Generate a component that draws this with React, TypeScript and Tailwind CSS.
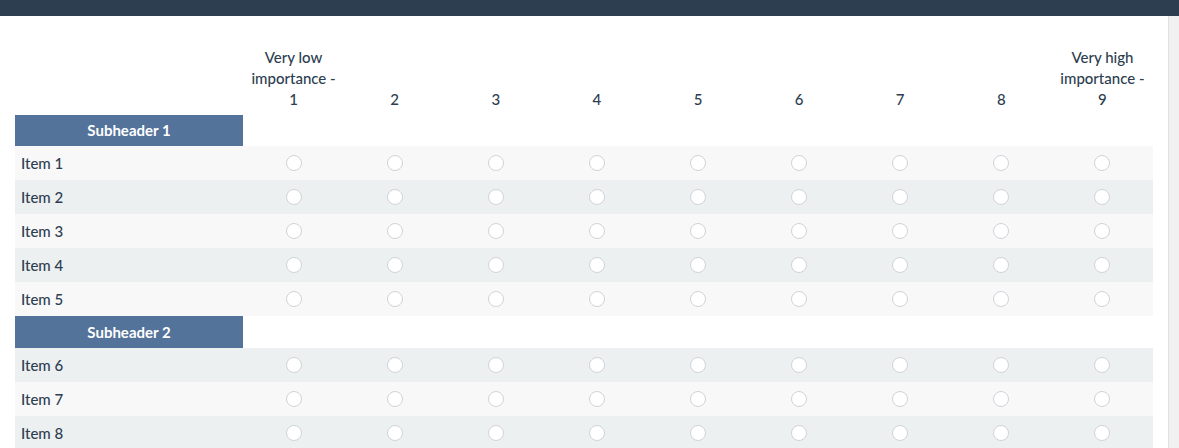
import React from "react";

const cols = ["1", "2", "3", "4", "5", "6", "7", "8", "9"];

function Radio() {
  return (
    <div className="flex items-center justify-center">
      <span className="block h-[16px] w-[16px] rounded-full border border-[#cfd4d8] bg-white" />
    </div>
  );
}

function ItemRow({ label, even }: { label: string; even: boolean }) {
  return (
    <div
      className={`grid h-[34px] grid-cols-[228px_repeat(9,1fr)] items-center ${
        even ? "bg-[#ecf0f1]" : "bg-[#f8f8f8]"
      }`}
    >
      <div className="pl-[6px] text-[15px] font-medium text-[#2c3e50]">{label}</div>
      {cols.map((c) => (
        <Radio key={c} />
      ))}
    </div>
  );
}

function Subheader({ label, h }: { label: string; h: string }) {
  return (
    <div className={`grid grid-cols-[228px_repeat(9,1fr)] bg-white ${h}`}>
      <div className="flex items-center justify-center bg-[#53739a] text-[15px] font-bold text-white">
        {label}
      </div>
    </div>
  );
}

export default function App() {
  return (
    <div className="flex h-[448px] w-[1179px] flex-col overflow-hidden bg-white font-['Lato','Noto_Sans',sans-serif]">
      <div className="h-[16px] w-full shrink-0 bg-[#2c3e50]" />
      <div className="flex min-h-0 flex-1">
        <div className="flex-1 pl-[15px] pr-[15px] pt-[31px]">
          <div className="grid grid-cols-[228px_repeat(9,1fr)] items-end pb-[5px] text-center text-[15px] font-medium leading-[21px] text-[#2c3e50]">
            <div />
            <div>
              Very low
              <br />
              importance -
              <br />1
            </div>
            {cols.slice(1, 8).map((c) => (
              <div key={c}>{c}</div>
            ))}
            <div>
              Very high
              <br />
              importance -
              <br />9
            </div>
          </div>
          <Subheader label="Subheader 1" h="h-[31px]" />
          {[1, 2, 3, 4, 5].map((n) => (
            <ItemRow key={n} label={`Item ${n}`} even={n % 2 === 0} />
          ))}
          <Subheader label="Subheader 2" h="h-[32px]" />
          {[6, 7, 8].map((n) => (
            <ItemRow key={n} label={`Item ${n}`} even={n % 2 === 0} />
          ))}
        </div>
        <div className="w-[11px] shrink-0 border-l border-[#e0e0e0] bg-[#f1f1f1]" />
      </div>
    </div>
  );
}
